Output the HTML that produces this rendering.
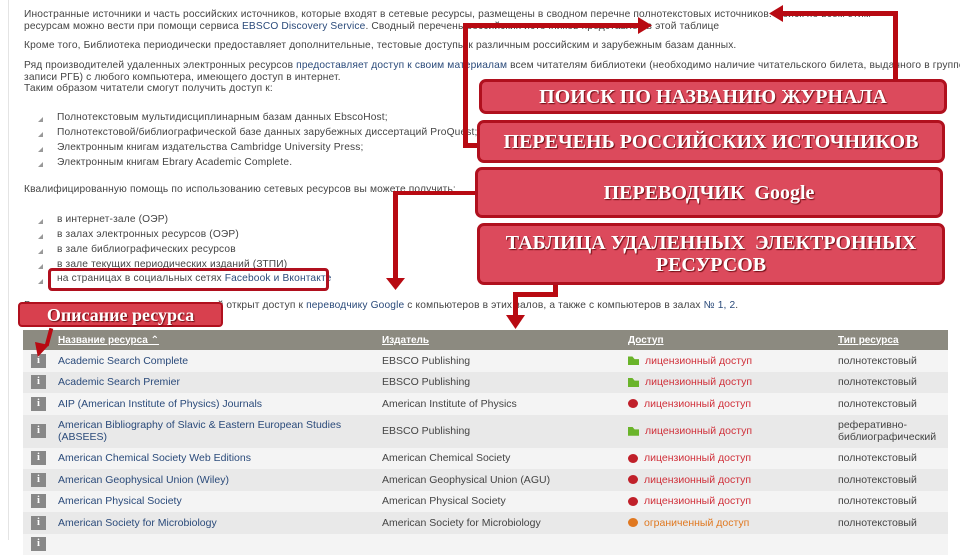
<!DOCTYPE html>
<html><head><meta charset="utf-8">
<style>
*{margin:0;padding:0;box-sizing:border-box}
body{width:960px;height:540px;overflow:hidden;background:#fff;font-family:"Liberation Sans","DejaVu Sans",sans-serif;font-size:10.2px;color:#444;position:relative}
.t{position:absolute;white-space:nowrap;line-height:12px;letter-spacing:0.15px}
.b{position:absolute;left:38px;width:5px;height:5px;background:#999;clip-path:polygon(100% 0,100% 100%,0 100%)}
a{color:#2a4a7a;text-decoration:none}
.box{position:absolute;background:#dc4a5c;border:3px solid #b0101e;border-radius:7px;color:#fff;font-family:"Liberation Serif",serif;font-weight:bold;font-size:20px;text-align:center;text-shadow:1px 1px 1px #6a0a10;display:flex;align-items:center;justify-content:center;line-height:22px}
.r{position:absolute;background:#b80a12}
table{position:absolute;left:23px;top:330px;width:925px;border-collapse:collapse}
td{padding:0 0 0 3px;height:21.5px;font-size:10.5px;color:#444}
th{background:#8c8a80;height:20px;text-align:left;color:#fff;font-size:10px;text-decoration:underline;padding-left:3px}
tr:nth-child(even) td{background:#f4f4f4}
tr:nth-child(odd) td{background:#e9e9e9}
.i{display:inline-block;width:15px;height:14px;background:#888;color:#fff;font-weight:bold;text-align:center;line-height:14px;font-family:"Liberation Serif",serif;margin-left:5px}
.n{color:#2a4a7a}
.g{display:inline-block;width:11px;height:9px;background:#6ab42a;margin-right:6px;vertical-align:middle;clip-path:polygon(0 0,40% 0,60% 30%,100% 30%,100% 100%,0 100%)}
.d{display:inline-block;width:10px;height:9px;border-radius:50%;background:#c0202a;margin-right:6px;vertical-align:middle}
.lic{color:#d0303a}
</style></head><body>
<div style="position:absolute;left:8px;top:0;width:1px;height:540px;background:#e4e4e4"></div>
<div class="t" style="left:24px;top:9px">Иностранные источники и часть российских источников, которые входят в сетевые ресурсы, размещены в сводном перечне полнотекстовых источников. Поиск по всем этим</div>
<div class="t" style="left:24px;top:21px">ресурсам можно вести при помощи сервиса <a>EBSCO Discovery Service</a>. Сводный перечень российских источников представлен в этой таблице</div>
<div class="t" style="left:24px;top:40px">Кроме того, Библиотека периодически предоставляет дополнительные, тестовые доступы к различным российским и зарубежным базам данных.</div>
<div class="t" style="left:24px;top:60px">Ряд производителей удаленных электронных ресурсов <a>предоставляет доступ к своим материалам</a> всем читателям библиотеки (необходимо наличие читательского билета, выданного в группе</div>
<div class="t" style="left:24px;top:72px">записи РГБ) с любого компьютера, имеющего доступ в интернет.</div>
<div class="t" style="left:24px;top:83px">Таким образом читатели смогут получить доступ к:</div>
<div class="b" style="top:117px"></div><div class="t" style="left:57px;top:112px">Полнотекстовым мультидисциплинарным базам данных EbscoHost;</div>
<div class="b" style="top:132px"></div><div class="t" style="left:57px;top:127px">Полнотекстовой/библиографической базе данных зарубежных диссертаций ProQuest;</div>
<div class="b" style="top:147px"></div><div class="t" style="left:57px;top:142px">Электронным книгам издательства Cambridge University Press;</div>
<div class="b" style="top:162px"></div><div class="t" style="left:57px;top:157px">Электронным книгам Ebrary Academic Complete.</div>
<div class="t" style="left:24px;top:184px">Квалифицированную помощь по использованию сетевых ресурсов вы можете получить:</div>
<div class="b" style="top:219px"></div><div class="t" style="left:57px;top:214px">в интернет-зале (ОЭР)</div>
<div class="b" style="top:234px"></div><div class="t" style="left:57px;top:229px">в залах электронных ресурсов (ОЭР)</div>
<div class="b" style="top:249px"></div><div class="t" style="left:57px;top:244px">в зале библиографических ресурсов</div>
<div class="b" style="top:264px"></div><div class="t" style="left:57px;top:259px">в зале текущих периодических изданий (ЗТПИ)</div>
<div class="b" style="top:279px"></div><div class="t" style="left:57px;top:273px">на страницах в социальных сетях <a>Facebook и Вконтакте</a></div>
<div style="position:absolute;left:48px;top:268px;width:281px;height:23px;border:3px solid #b0101e;border-radius:4px"></div>
<div class="t" style="left:24px;top:300px">В залах текущих периодических изданий открыт доступ к <a>переводчику Google</a> с компьютеров в этих залов, а также с компьютеров в залах <a>№ 1, 2</a>.</div>

<table>
<tr><th style="width:32px"></th><th style="width:324px">Название ресурса ⌃</th><th style="width:246px">Издатель</th><th style="width:210px">Доступ</th><th>Тип ресурса</th></tr>
<tr><td><span class="i">i</span></td><td class="n">Academic Search Complete</td><td>EBSCO Publishing</td><td><span class="g"></span><span class="lic">лицензионный доступ</span></td><td>полнотекстовый</td></tr>
<tr><td><span class="i">i</span></td><td class="n">Academic Search Premier</td><td>EBSCO Publishing</td><td><span class="g"></span><span class="lic">лицензионный доступ</span></td><td>полнотекстовый</td></tr>
<tr><td><span class="i">i</span></td><td class="n">AIP (American Institute of Physics) Journals</td><td>American Institute of Physics</td><td><span class="d"></span><span class="lic">лицензионный доступ</span></td><td>полнотекстовый</td></tr>
<tr><td style="height:33px"><span class="i">i</span></td><td class="n" style="line-height:12px">American Bibliography of Slavic &amp; Eastern European Studies<br>(ABSEES)</td><td>EBSCO Publishing</td><td><span class="g"></span><span class="lic">лицензионный доступ</span></td><td style="line-height:12px">реферативно-<br>библиографический</td></tr>
<tr><td><span class="i">i</span></td><td class="n">American Chemical Society Web Editions</td><td>American Chemical Society</td><td><span class="d"></span><span class="lic">лицензионный доступ</span></td><td>полнотекстовый</td></tr>
<tr><td><span class="i">i</span></td><td class="n">American Geophysical Union (Wiley)</td><td>American Geophysical Union (AGU)</td><td><span class="d"></span><span class="lic">лицензионный доступ</span></td><td>полнотекстовый</td></tr>
<tr><td><span class="i">i</span></td><td class="n">American Physical Society</td><td>American Physical Society</td><td><span class="d"></span><span class="lic">лицензионный доступ</span></td><td>полнотекстовый</td></tr>
<tr><td><span class="i">i</span></td><td class="n">American Society for Microbiology</td><td>American Society for Microbiology</td><td><span class="d" style="background:#e07820"></span><span style="color:#e07820">ограниченный доступ</span></td><td>полнотекстовый</td></tr>
<tr><td><span class="i">i</span></td><td></td><td></td><td></td><td></td></tr>
</table>

<!-- arrows -->
<div class="r" style="left:893px;top:11px;width:5px;height:70px"></div>
<div class="r" style="left:780px;top:11px;width:118px;height:5px"></div>
<div class="r" style="left:769px;top:5px;width:14px;height:17px;clip-path:polygon(0 50%,100% 0,100% 100%)"></div>
<div class="r" style="left:463px;top:23px;width:5px;height:125px"></div>
<div class="r" style="left:463px;top:23px;width:178px;height:5px"></div>
<div class="r" style="left:638px;top:17px;width:14px;height:17px;clip-path:polygon(0 0,100% 50%,0 100%)"></div>
<div class="r" style="left:463px;top:143px;width:16px;height:5px"></div>
<div class="r" style="left:393px;top:191px;width:83px;height:4px"></div>
<div class="r" style="left:393px;top:191px;width:5px;height:89px"></div>
<div class="r" style="left:386px;top:278px;width:19px;height:12px;clip-path:polygon(0 0,100% 0,50% 100%)"></div>
<div class="r" style="left:553px;top:283px;width:5px;height:13px"></div>
<div class="r" style="left:513px;top:292px;width:45px;height:5px"></div>
<div class="r" style="left:513px;top:292px;width:5px;height:25px"></div>
<div class="r" style="left:506px;top:315px;width:19px;height:14px;clip-path:polygon(0 0,100% 0,50% 100%)"></div>
<div class="r" style="left:47px;top:328px;width:4px;height:18px;transform:rotate(15deg)"></div>
<div class="r" style="left:35px;top:342px;width:14px;height:15px;clip-path:polygon(0 0,100% 20%,20% 100%)"></div>

<div class="box" style="left:479px;top:79px;width:468px;height:35px">ПОИСК ПО НАЗВАНИЮ ЖУРНАЛА</div>
<div class="box" style="left:477px;top:120px;width:468px;height:43px">ПЕРЕЧЕНЬ РОССИЙСКИХ ИСТОЧНИКОВ</div>
<div class="box" style="left:475px;top:167px;width:468px;height:51px">ПЕРЕВОДЧИК&nbsp; Google</div>
<div class="box" style="left:477px;top:223px;width:468px;height:62px">ТАБЛИЦА УДАЛЕННЫХ&nbsp; ЭЛЕКТРОННЫХ<br>РЕСУРСОВ</div>
<div class="box" style="left:18px;top:302px;width:205px;height:25px;font-size:18px;border-width:2px;border-radius:4px;font-weight:bold;background:#d8404e">Описание ресурса</div>
</body></html>
